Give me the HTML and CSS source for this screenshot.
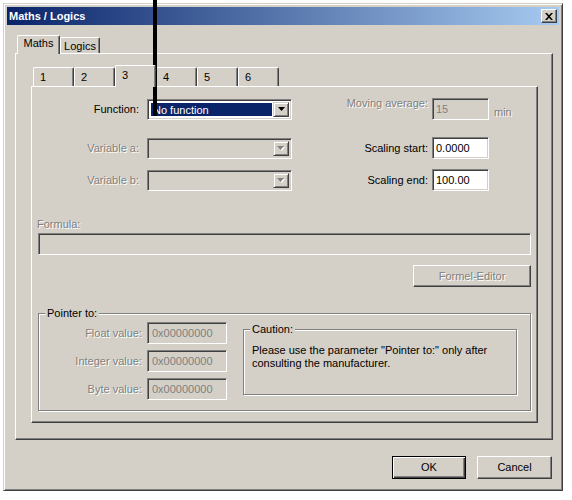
FILE: index.html
```html
<!DOCTYPE html>
<html>
<head>
<meta charset="utf-8">
<title>Maths / Logics</title>
<link rel="stylesheet" href="styles.css">
</head>
<body>
<div class="window">
  <div class="titlebar">
    <span class="title">Maths / Logics</span>
    <span class="close"><svg width="8" height="7" viewBox="0 0 8 7"><path d="M0 0h2l2 2.2L6 0h2L5 3.5 8 7H6L4 4.8 2 7H0l3-3.5z" fill="#000"/></svg></span>
  </div>
  <div class="tabstrip outer-strip">
    <div class="tab sel w43">Maths</div>
    <div class="tab w40">Logics</div>
  </div>
  <div class="panel outer-panel">
    <div class="tabstrip inner-strip">
      <div class="tab itab">1</div>
      <div class="tab itab">2</div>
      <div class="tab itab sel">3</div>
      <div class="tab itab">4</div>
      <div class="tab itab">5</div>
      <div class="tab itab">6</div>
    </div>
    <div class="panel inner-panel">
      <div class="frow r1">
        <span class="lbl">Function:</span>
        <div class="combo">
          <div class="combo-text"><span class="hl">No function</span></div>
          <div class="combo-btn"><svg width="7" height="4" viewBox="0 0 7 4"><polygon points="0,0 7,0 3.5,4" fill="#000"/></svg></div>
        </div>
        <span class="lbl2 dis top">Moving average:</span>
        <div class="edit off">15</div>
        <span class="unit dis">min</span>
      </div>
      <div class="frow r2">
        <span class="lbl dis">Variable a:</span>
        <div class="combo off">
          <div class="combo-text"></div>
          <div class="combo-btn"><svg width="8" height="5" viewBox="0 0 8 5"><polygon points="1,1 8,1 4.5,5" fill="#fff"/><polygon points="0,0 7,0 3.5,4" fill="#808080"/></svg></div>
        </div>
        <span class="lbl2">Scaling start:</span>
        <div class="edit">0.0000</div>
        <span></span>
      </div>
      <div class="frow r3">
        <span class="lbl dis">Variable b:</span>
        <div class="combo off">
          <div class="combo-text"></div>
          <div class="combo-btn"><svg width="8" height="5" viewBox="0 0 8 5"><polygon points="1,1 8,1 4.5,5" fill="#fff"/><polygon points="0,0 7,0 3.5,4" fill="#808080"/></svg></div>
        </div>
        <span class="lbl2">Scaling end:</span>
        <div class="edit">100.00</div>
        <span></span>
      </div>
      <div class="pad">
        <div class="formula-lbl dis">Formula:</div>
        <div class="edit off formula"></div>
        <div class="btnrow">
          <div class="btn dis formel">Formel-Editor</div>
        </div>
        <fieldset class="group pointer">
          <legend>Pointer to:</legend>
          <div class="ptr-body">
            <div class="ptr-rows">
              <span class="plbl dis">Float value:</span>
              <div class="edit off hex">0x00000000</div>
              <span class="plbl dis">Integer value:</span>
              <div class="edit off hex">0x00000000</div>
              <span class="plbl dis">Byte value:</span>
              <div class="edit off hex">0x00000000</div>
            </div>
            <fieldset class="group caution">
              <legend>Caution:</legend>
              <div class="caution-body">Please use the parameter "Pointer to:" only after<br>consulting the manufacturer.</div>
            </fieldset>
          </div>
        </fieldset>
      </div>
    </div>
  </div>
  <div class="buttons">
    <div class="btn default ok">OK</div>
    <div class="btn cancel">Cancel</div>
  </div>
</div>
<div class="pointer-line"></div>
</body>
</html>
```
FILE: styles.css
```css
* { box-sizing: border-box; }

body {
  margin: 0;
  background: #fff;
  font: 11px/13px "Liberation Sans", Arial, sans-serif;
  color: #000;
}

.window {
  margin: 3px 0 0 3px;
  width: 560px;
  height: 488px;
  background: #d4d0c8;
  border: 1px solid;
  border-color: #d4d0c8 #404040 #404040 #d4d0c8;
  box-shadow: inset 1px 1px #fff, inset -1px -1px #808080;
  padding: 3px;
  display: flex;
  flex-direction: column;
}

.titlebar {
  height: 18px;
  flex: none;
  background: linear-gradient(to right, #0a246a, #a6caf0);
  display: flex;
  align-items: center;
  padding: 0 2px 0 2px;
  color: #fff;
  font-weight: bold;
}
.title { flex: 1; }
.close {
  width: 16px;
  height: 14px;
  background: #d4d0c8;
  border: 1px solid;
  border-color: #fff #404040 #404040 #fff;
  box-shadow: inset -1px -1px #808080;
  display: flex;
  align-items: center;
  justify-content: center;
}
.close svg { display: block; }

.tabstrip {
  display: flex;
  align-items: flex-end;
  flex: none;
}
.outer-strip {
  height: 18px;
  margin-top: 10px;
  padding-left: 10px;
}
.inner-strip {
  height: 21px;
  padding-left: 2px;
}

.tab {
  background: #d4d0c8;
  border-top: 1px solid #fff;
  border-left: 1px solid #fff;
  border-right: 1px solid #404040;
  box-shadow: inset -1px 0 #808080;
  border-radius: 2px 2px 0 0;
  height: 16px;
  padding-top: 2px;
  text-align: center;
}
.tab.sel {
  height: 19px;
  margin-bottom: -1px;
  position: relative;
  z-index: 1;
  padding-top: 1px;
}
.w43 { width: 43px; }
.w40 { width: 40px; }
.itab {
  width: 41px;
  height: 19px;
  text-align: left;
  padding: 3px 0 0 6px;
}
.itab.sel {
  height: 22px;
  padding-top: 3px;
}

.panel {
  background: #d4d0c8;
  border: 1px solid;
  border-color: #fff #404040 #404040 #fff;
  box-shadow: inset -1px -1px #808080;
  display: flex;
  flex-direction: column;
}
.outer-panel {
  flex: 1;
  margin: 0 6px 0 8px;
  padding: 11px 14px 16px 15px;
}
.inner-panel {
  flex: 1;
}

.frow {
  display: grid;
  grid-template-columns: 115px 145px 140px 57px auto;
  align-items: center;
  height: 22px;
  flex: none;
}
.r1 { margin-top: 11px; }
.r2 { margin-top: 17px; }
.r3 { margin-top: 10px; }

.lbl { text-align: right; padding-right: 8px; white-space: nowrap; }
.lbl2 { text-align: right; padding-right: 4px; white-space: nowrap; }
.lbl2.top { align-self: start; margin-top: -1px; }
.unit { padding-left: 5px; align-self: end; margin-bottom: 1px; }

.dis {
  color: #808080;
  text-shadow: 1px 1px 0 #fff;
}

.combo {
  width: 145px;
  height: 21px;
  border: 1px solid;
  border-color: #808080 #fff #fff #808080;
  box-shadow: inset 1px 1px #404040, inset -1px -1px #d4d0c8;
  background: #fff;
  display: flex;
  padding: 2px;
}
.combo.off { background: #d4d0c8; }
.combo-text {
  flex: 1;
  padding: 1px;
  display: flex;
}
.hl {
  flex: 1;
  background: #0a246a;
  color: #fff;
  padding-left: 2px;
  line-height: 15px;
}
.combo-btn {
  width: 16px;
  border: 1px solid;
  border-color: #d4d0c8 #404040 #404040 #d4d0c8;
  box-shadow: inset 1px 1px #fff, inset -1px -1px #808080;
  background: #d4d0c8;
  display: flex;
  align-items: center;
  justify-content: center;
}
.combo-btn svg { display: block; }

.edit {
  height: 22px;
  border: 1px solid;
  border-color: #808080 #fff #fff #808080;
  box-shadow: inset 1px 1px #404040, inset -1px -1px #d4d0c8;
  background: #fff;
  padding: 0 3px;
  line-height: 20px;
  white-space: nowrap;
}
.edit.off {
  background: #d4d0c8;
  color: #808080;
}

.pad {
  padding: 0 6px;
  display: flex;
  flex-direction: column;
}
.formula-lbl {
  margin-top: 27px;
  margin-left: -1px;
}
.formula {
  margin-top: 2px;
  height: 22px;
}
.btnrow {
  display: flex;
  justify-content: flex-end;
  margin-top: 10px;
}

.btn {
  height: 22px;
  background: #d4d0c8;
  border: 1px solid;
  border-color: #fff #404040 #404040 #fff;
  box-shadow: inset -1px -1px #808080;
  display: flex;
  align-items: center;
  justify-content: center;
}
.formel { width: 118px; }

.group {
  margin: 0;
  padding: 0;
  min-inline-size: 0;
  border: 1px solid #808080;
  box-shadow: inset 1px 1px #fff, 1px 1px 0 #fff;
}
.group legend {
  padding: 0 2px;
  margin-left: 6px;
  line-height: 13px;
  background: #d4d0c8;
}
.pointer { margin-top: 20px; }
.ptr-body {
  display: flex;
  padding: 2px 0 10px 0;
}
.ptr-rows {
  display: grid;
  grid-template-columns: 108px 80px;
  grid-auto-rows: 22px;
  row-gap: 6px;
  align-items: center;
}
.plbl { text-align: right; padding-right: 5px; white-space: nowrap; }
.hex { padding-left: 4px; }

.caution {
  width: 274px;
  margin-left: 16px;
  margin-top: 1px;
  align-self: flex-start;
}
.caution-body {
  padding: 8px 8px 24px 8px;
  white-space: nowrap;
}

.buttons {
  flex: none;
  display: flex;
  justify-content: flex-end;
  gap: 11px;
  margin: 16px 7px 8px 0;
  height: 23px;
}
.buttons .btn { height: 23px; }
.ok { width: 74px; }
.cancel { width: 75px; }
.btn.default {
  border: 1px solid #000;
  box-shadow: inset 1px 1px #fff, inset -1px -1px #404040, inset -2px -2px #808080;
}

.pointer-line {
  position: absolute;
  left: 153px;
  top: 0;
  width: 4px;
  height: 116px;
  background: #000;
}
```
